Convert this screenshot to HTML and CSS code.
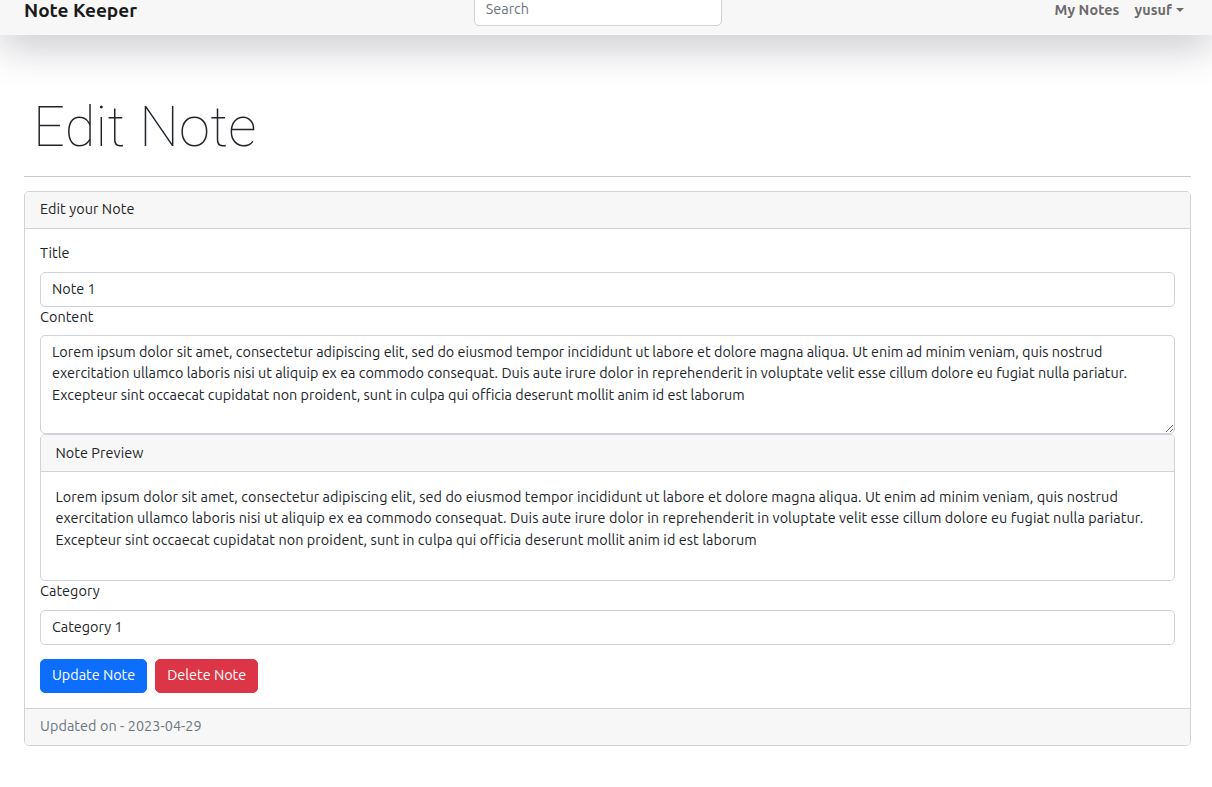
FILE: index.html
```html
<!DOCTYPE html>
<html lang="en">
<head>
<meta charset="utf-8">
<title>Note Keeper - Edit Note</title>
<link rel="stylesheet" href="styles.css">
</head>
<body>
<nav class="navbar">
  <div class="navbar-row">
    <a class="brand" href="#">Note Keeper</a>
    <div class="spacer"></div>
    <input class="search" type="text" placeholder="Search">
    <div class="spacer"></div>
    <div class="nav-links">
      <a class="nav-link" href="#">My Notes</a>
      <a class="nav-link dropdown" href="#">yusuf<span class="caret"></span></a>
    </div>
  </div>
</nav>

<main class="page">
  <h1 class="display">Edit Note</h1>
  <hr class="divider">

  <section class="card">
    <div class="card-header">Edit your Note</div>
    <div class="card-body">
      <label class="form-label">Title</label>
      <input class="form-control" type="text" value="Note 1">
      <label class="form-label">Content</label>
      <textarea class="form-control textarea" rows="4">Lorem ipsum dolor sit amet, consectetur adipiscing elit, sed do eiusmod tempor incididunt ut labore et dolore magna aliqua. Ut enim ad minim veniam, quis nostrud exercitation ullamco laboris nisi ut aliquip ex ea commodo consequat. Duis aute irure dolor in reprehenderit in voluptate velit esse cillum dolore eu fugiat nulla pariatur. Excepteur sint occaecat cupidatat non proident, sunt in culpa qui officia deserunt mollit anim id est laborum</textarea>
      <div class="card preview">
        <div class="card-header">Note Preview</div>
        <div class="card-body">
          <p class="preview-text">Lorem ipsum dolor sit amet, consectetur adipiscing elit, sed do eiusmod tempor incididunt ut labore et dolore magna aliqua. Ut enim ad minim veniam, quis nostrud exercitation ullamco laboris nisi ut aliquip ex ea commodo consequat. Duis aute irure dolor in reprehenderit in voluptate velit esse cillum dolore eu fugiat nulla pariatur. Excepteur sint occaecat cupidatat non proident, sunt in culpa qui officia deserunt mollit anim id est laborum</p>
        </div>
      </div>
      <label class="form-label">Category</label>
      <input class="form-control" type="text" value="Category 1">
      <div class="actions">
        <button class="btn btn-primary" type="button">Update Note</button>
        <button class="btn btn-danger" type="button">Delete Note</button>
      </div>
    </div>
    <div class="card-footer">Updated on - 2023-04-29</div>
  </section>
</main>
</body>
</html>
```

FILE: styles.css
```css
* { box-sizing: border-box; }

html, body {
  margin: 0;
  background: #fff;
}

body {
  font-family: Ubuntu, Roboto, "Liberation Sans", sans-serif;
  font-size: 14.4px;
  line-height: 1.5;
  letter-spacing: 0.075px;
  color: #212529;
}

.navbar {
  position: relative;
  z-index: 2;
  height: 35px;
  overflow: hidden;
  background: #f7f7f8;
  box-shadow: 0 10px 40px rgba(30, 30, 50, 0.28);
}

.navbar-row {
  height: 20px;
  display: flex;
  align-items: center;
  padding: 0 28px 0 24px;
}

.brand {
  font-size: 19px;
  font-weight: 700;
  color: #1a1a1a;
  text-decoration: none;
  line-height: 1;
  letter-spacing: 0;
}

.spacer { flex: 1; }

.search {
  width: 248px;
  height: 34px;
  flex: none;
  border: 1px solid #ced4da;
  border-radius: 5px;
  background: #fff;
  padding: 5px 11px;
  font: inherit;
  font-size: 14.4px;
  color: #212529;
  margin: 0 -2px 2px 2px;
}
.search::placeholder { color: #6c757d; }

.nav-links {
  display: flex;
  align-items: center;
  gap: 15px;
}

.nav-link {
  font-weight: 700;
  color: #6a6a6a;
  text-decoration: none;
  line-height: 1;
}

.caret {
  display: inline-block;
  margin-left: 4px;
  vertical-align: 3px;
  border-top: 4px solid #6a6a6a;
  border-left: 4px solid transparent;
  border-right: 4px solid transparent;
}

.page {
  padding: 0 21px 40px 24px;
}

.display {
  margin: 59px 0 3px 9px;
  font-family: Roboto, "Liberation Sans", sans-serif;
  font-size: 56px;
  font-weight: 100;
  line-height: 1.2;
  letter-spacing: 0.3px;
  color: #212529;
}

.divider {
  margin: 14.4px 0;
  border: 0;
  border-top: 1px solid #c8c8c8;
  height: 0;
}

.card {
  border: 1px solid #d3d3d3;
  border-radius: 5px;
  background: #fff;
  overflow: hidden;
}

.card-header {
  padding: 7.2px 15px;
  background: #f7f7f7;
  border-bottom: 1px solid #d3d3d3;
}

.card-body {
  padding: 14.4px 15px;
  display: flex;
  flex-direction: column;
  align-items: stretch;
}

.card-footer {
  padding: 7.2px 15px;
  background: #f7f7f7;
  border-top: 1px solid #d3d3d3;
  color: #6c757d;
}

.form-label {
  display: block;
  margin-bottom: 7.2px;
}

.form-control {
  display: block;
  width: 100%;
  padding: 5.4px 11px;
  font: inherit;
  line-height: 1.5;
  color: #212529;
  background: #fff;
  border: 1px solid #ced4da;
  border-radius: 5px;
}

.textarea {
  height: 99.2px;
  resize: vertical;
}

.preview {
  border-color: #ced4da;
}
.preview .card-header {
  padding: 7.2px 14.4px;
  border-bottom-color: #ced4da;
}
.preview .card-body {
  padding: 14.4px;
}

.preview-text {
  margin: 0 0 14.4px;
}

.actions {
  display: flex;
  gap: 8px;
  margin-top: 14.4px;
}

.btn {
  font: inherit;
  line-height: 1.5;
  padding: 5.4px 11px;
  border: 1px solid transparent;
  border-radius: 5px;
  color: #fff;
  cursor: pointer;
}

.btn-primary { background: #0d6efd; border-color: #0d6efd; }
.btn-danger { background: #dc3545; border-color: #dc3545; }
```
